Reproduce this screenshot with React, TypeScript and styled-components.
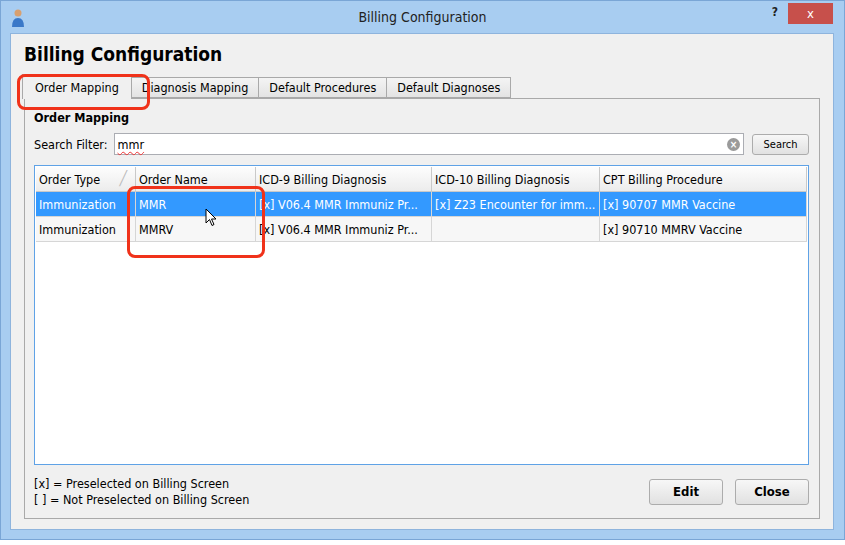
import styled, { createGlobalStyle } from "styled-components";

const Global = createGlobalStyle`
  html, body { margin: 0; padding: 0; background: #fff; }
  body { font-family: "DejaVu Sans Condensed", "DejaVu Sans", sans-serif; font-size: 12.5px; color: #000; }
`;

const Frame = styled.div`
  position: relative;
  width: 843px;
  height: 538px;
  background: #a8cdf1;
  border: 1px solid #7aa6d6;
  display: flex;
  flex-direction: column;
`;

const TitleBar = styled.div`
  height: 35px;
  display: flex;
  align-items: center;
  position: relative;
`;

const TitleText = styled.div`
  flex: 1;
  text-align: center;
  font-size: 14px;
  color: #222;
`;

const CloseBtn = styled.div`
  position: absolute;
  right: 11px;
  top: 2px;
  width: 45px;
  height: 21px;
  background: #c7504b;
  color: #fff;
  font-size: 13px;
  display: flex;
  align-items: center;
  justify-content: center;
`;

const Help = styled.div`
  position: absolute;
  right: 66px;
  top: 4px;
  font-weight: bold;
  font-size: 12px;
  color: #222;
`;

const Client = styled.div`
  margin: 0 10px 9px 9px;
  flex: 1;
  background: #f0f0f0;
  border: 1px solid #8eb4dd;
  padding: 8px 13px 10px 13px;
  display: flex;
  flex-direction: column;
`;

const Heading = styled.h1`
  margin: 0 0 8px 0;
  font-family: "DejaVu Sans Condensed", sans-serif;
  font-size: 19px;
  font-weight: bold;
  line-height: 24px;
`;

const Tabs = styled.div`
  display: flex;
  align-items: flex-end;
  height: 24px;
  margin-left: -2px;
`;

const Tab = styled.div<{ $active?: boolean }>`
  height: ${p => (p.$active ? 24 : 19)}px;
  padding: 0 ${p => (p.$active ? 12 : 10)}px;
  display: flex;
  align-items: center;
  background: ${p => (p.$active ? "#f0f0f0" : "linear-gradient(#f4f4f4, #e3e3e3)")};
  border: 1px solid #a9a9a9;
  border-bottom: ${p => (p.$active ? "none" : "1px solid #a9a9a9")};
  margin-left: ${p => (p.$active ? 0 : -1)}px;
  position: relative;
  z-index: ${p => (p.$active ? 2 : 1)};
  margin-bottom: ${p => (p.$active ? -1 : 0)}px;
`;

const Pane = styled.div`
  flex: 1;
  border: 1px solid #a9a9a9;
  background: #f0f0f0;
  padding: 11px 10px 10px 9px;
  display: flex;
  flex-direction: column;
`;

const SectionTitle = styled.div`
  font-weight: bold;
  margin-bottom: 8px;
`;

const SearchRow = styled.div`
  display: flex;
  align-items: center;
  gap: 6px;
  margin-bottom: 10px;
`;

const Input = styled.div`
  flex: 1;
  height: 20px;
  background: #fff;
  border: 1px solid #abadb3;
  display: flex;
  align-items: center;
  padding: 0 3px;
  margin-right: 2px;
`;

const Typed = styled.span`
  flex: 1;
  text-decoration: underline wavy #e33;
  text-decoration-thickness: 1px;
  text-underline-offset: 2px;
  text-decoration-skip-ink: none;
`;

const ClearIcon = styled.div`
  width: 13px;
  height: 13px;
  border-radius: 50%;
  background: #9a9a9a;
  color: #fff;
  font-size: 10px;
  line-height: 13px;
  text-align: center;
  font-weight: bold;
`;

const Btn = styled.div<{ $bold?: boolean; $w: number; $h: number }>`
  width: ${p => p.$w}px;
  height: ${p => p.$h}px;
  box-sizing: border-box;
  border: 1px solid #acacac;
  border-radius: 3px;
  background: linear-gradient(#f7f7f7, #e1e1e1);
  display: flex;
  align-items: center;
  justify-content: center;
  font-weight: ${p => (p.$bold ? "bold" : "normal")};
  font-size: ${p => (p.$bold ? 13 : 11)}px;
`;

const Grid = styled.div`
  height: 296px;
  border: 1px solid #5fa2e6;
  background: #fff;
  padding: 1px;
`;

const cols = "100px 120px 176px 168px 1fr";

const HeaderRow = styled.div`
  display: grid;
  grid-template-columns: ${cols};
  height: 24px;
  background: linear-gradient(#fdfdfd, #ececec);
  border-bottom: 1px solid #c9c9c9;
`;

const HeadCell = styled.div`
  display: flex;
  align-items: center;
  padding-left: 3px;
  border-right: 1px solid #c9c9c9;
  position: relative;
`;

const SortMark = styled.span`
  position: absolute;
  right: 8px;
  top: 3px;
  color: #bbb;
  font-size: 14px;
`;

const Row = styled.div<{ $sel?: boolean }>`
  display: grid;
  grid-template-columns: ${cols};
  height: 24px;
  background: ${p => (p.$sel ? "#3399ff" : "#f7f7f7")};
  color: ${p => (p.$sel ? "#fff" : "#000")};
  border-bottom: 1px solid #d6d6d6;
`;

const Cell = styled.div`
  display: flex;
  align-items: center;
  padding-left: 3px;
  border-right: 1px solid #d6d6d6;
  white-space: nowrap;
  overflow: hidden;
`;

const Footer = styled.div`
  display: flex;
  align-items: center;
  margin-top: 11px;
  line-height: 16px;
`;

const Legend = styled.div`
  flex: 1;
`;

const Buttons = styled.div`
  display: flex;
  gap: 12px;
`;

const Highlight = styled.div<{ $x: number; $y: number; $w: number; $h: number }>`
  position: absolute;
  left: ${p => p.$x}px;
  top: ${p => p.$y}px;
  width: ${p => p.$w}px;
  height: ${p => p.$h}px;
  border: 3px solid #f0321a;
  border-radius: 8px;
  box-sizing: border-box;
  pointer-events: none;
  z-index: 5;
`;

const Cursor = styled.svg`
  position: absolute;
  left: 204px;
  top: 207px;
  z-index: 6;
`;

const rows = [
  ["Immunization", "MMR", "[x] V06.4 MMR Immuniz Pr...", "[x] Z23 Encounter for imm...", "[x] 90707 MMR Vaccine"],
  ["Immunization", "MMRV", "[x] V06.4 MMR Immuniz Pr...", "", "[x] 90710 MMRV Vaccine"],
];

export default function App() {
  return (
    <>
      <Global />
      <Frame>
        <TitleBar>
          <svg width="14" height="20" viewBox="0 0 14 20" style={{ position: "absolute", left: 10, top: 7 }}>
            <circle cx="7" cy="5" r="3.5" fill="#d8a070" />
            <path d="M1 19 Q1 10 7 10 Q13 10 13 19 Z" fill="#3a78c8" />
          </svg>
          <TitleText>Billing Configuration</TitleText>
          <Help>?</Help>
          <CloseBtn>x</CloseBtn>
        </TitleBar>
        <Client>
          <Heading>Billing Configuration</Heading>
          <Tabs>
            <Tab $active>Order Mapping</Tab>
            <Tab>Diagnosis Mapping</Tab>
            <Tab>Default Procedures</Tab>
            <Tab>Default Diagnoses</Tab>
          </Tabs>
          <Pane>
            <SectionTitle>Order Mapping</SectionTitle>
            <SearchRow>
              <span>Search Filter:</span>
              <Input>
                <Typed>mmr</Typed>
                <ClearIcon>×</ClearIcon>
              </Input>
              <Btn $w={57} $h={21}>Search</Btn>
            </SearchRow>
            <Grid>
              <HeaderRow>
                <HeadCell>Order Type<SortMark>╱</SortMark></HeadCell>
                <HeadCell>Order Name</HeadCell>
                <HeadCell>ICD-9 Billing Diagnosis</HeadCell>
                <HeadCell>ICD-10 Billing Diagnosis</HeadCell>
                <HeadCell>CPT Billing Procedure</HeadCell>
              </HeaderRow>
              {rows.map((r, i) => (
                <Row key={i} $sel={i === 0}>
                  {r.map((c, j) => (
                    <Cell key={j}>{c}</Cell>
                  ))}
                </Row>
              ))}
            </Grid>
            <Footer>
              <Legend>
                <div>[x] = Preselected on Billing Screen</div>
                <div>[ ] = Not Preselected on Billing Screen</div>
              </Legend>
              <Buttons>
                <Btn $bold $w={74} $h={26}>Edit</Btn>
                <Btn $bold $w={74} $h={26}>Close</Btn>
              </Buttons>
            </Footer>
          </Pane>
        </Client>
        <Highlight $x={16} $y={73} $w={133} $h={36} />
        <Highlight $x={126} $y={185} $w={138} $h={72} />
        <Cursor width="12" height="19" viewBox="0 0 12 19">
          <path d="M1 1 L1 15 L4.5 11.5 L7 17.5 L9 16.5 L6.5 11 L11 11 Z" fill="#fff" stroke="#000" strokeWidth="1" />
        </Cursor>
      </Frame>
    </>
  );
}
